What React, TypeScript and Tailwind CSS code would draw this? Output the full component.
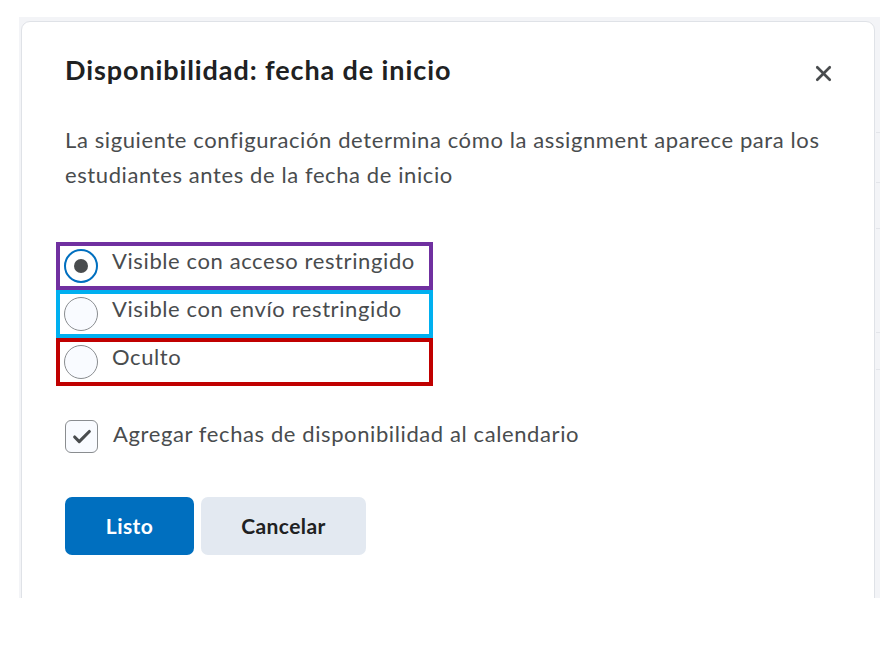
import { X, Check } from 'lucide-react';

const OPTIONS = [
  { label: 'Visible con acceso restringido', ring: 'border-[#7030a0]', checked: true },
  { label: 'Visible con envío restringido', ring: 'border-[#00b0f0]', checked: false },
  { label: 'Oculto', ring: 'border-[#c00000]', checked: false },
];

// row heights of the page behind the dialog (only a sliver shows on the right)
const BACK_ROWS = ['h-[112px]', 'h-[50px]', 'h-[46px]', 'h-[104px]', 'h-[37px]'];

function Radio({ checked }: { checked: boolean }) {
  if (checked) {
    return (
      <span className="flex size-[34px] shrink-0 items-center justify-center rounded-full border-2 border-[#006fbf] bg-white">
        <span className="size-[14px] rounded-full bg-[#494c4e]" />
      </span>
    );
  }
  return <span className="size-[34px] shrink-0 rounded-full border border-[#8a8d90] bg-[#f9fbff]" />;
}

export default function App() {
  return (
    <div className="h-[664px] w-[892px] bg-white font-['Lato','Noto_Sans',sans-serif] text-[#494c4e]">
      <div className="ml-[19px] h-[598px] w-[861px] pt-[17px]">
        <div className="flex h-full w-full overflow-hidden bg-[#f3f4f7] pl-[2px] pt-[4px]">
          {/* Dialog */}
          <div className="h-[600px] w-[854px] shrink-0 rounded-t-[9px] border border-[#dfe2e7] bg-white pl-[43px] pr-[42px] pt-[32px]">
            <div className="flex items-start justify-between">
              <h2 className="text-[27px] font-bold leading-[32px] tracking-[0.9px] text-[#202122]">Disponibilidad: fecha de inicio</h2>
              <button className="mt-[7px] mr-[-4px] text-[#494c4e]" aria-label="Cerrar">
                <X className="size-[25px]" strokeWidth={2.5} />
              </button>
            </div>

            <p className="mt-[36px] text-[22px] leading-[35px] tracking-[0.6px]">
              La siguiente configuración determina cómo la assignment aparece para los estudiantes antes de la fecha de inicio
            </p>

            <div className="mt-[50px] ml-[-9px] w-[377px]">
              {OPTIONS.map((o) => (
                <div key={o.label} className={`flex h-[48px] items-center gap-[14px] border-4 pl-[4px] ${o.ring}`}>
                  <Radio checked={o.checked} />
                  <span className="pb-[10px] text-[22px] leading-none tracking-[0.6px]">{o.label}</span>
                </div>
              ))}
            </div>

            <label className="mt-[34px] flex items-center gap-[15px]">
              <span className="flex size-[33px] items-center justify-center rounded-[6px] border border-[#8a8d90] bg-[#f9fbff]">
                <Check className="size-[22px] text-[#494c4e]" strokeWidth={3.4} />
              </span>
              <span className="pb-[5px] text-[22px] leading-none tracking-[0.6px]">Agregar fechas de disponibilidad al calendario</span>
            </label>

            <div className="mt-[44px] flex gap-[7px]">
              <button className="h-[58px] w-[129px] rounded-[7px] bg-[#006fbf] text-[21px] font-bold tracking-[0.4px] text-white">Listo</button>
              <button className="h-[58px] w-[165px] rounded-[7px] bg-[#e3e9f1] text-[21px] font-bold tracking-[0.4px] text-[#202122]">Cancelar</button>
            </div>
          </div>

          {/* sliver of the page behind */}
          <div className="ml-[1px] flex w-[4px] flex-col">
            {BACK_ROWS.map((h, i) => (
              <div key={i} className={`${h} border-b border-[#e3e5ea]`} />
            ))}
          </div>
        </div>
      </div>
    </div>
  );
}
